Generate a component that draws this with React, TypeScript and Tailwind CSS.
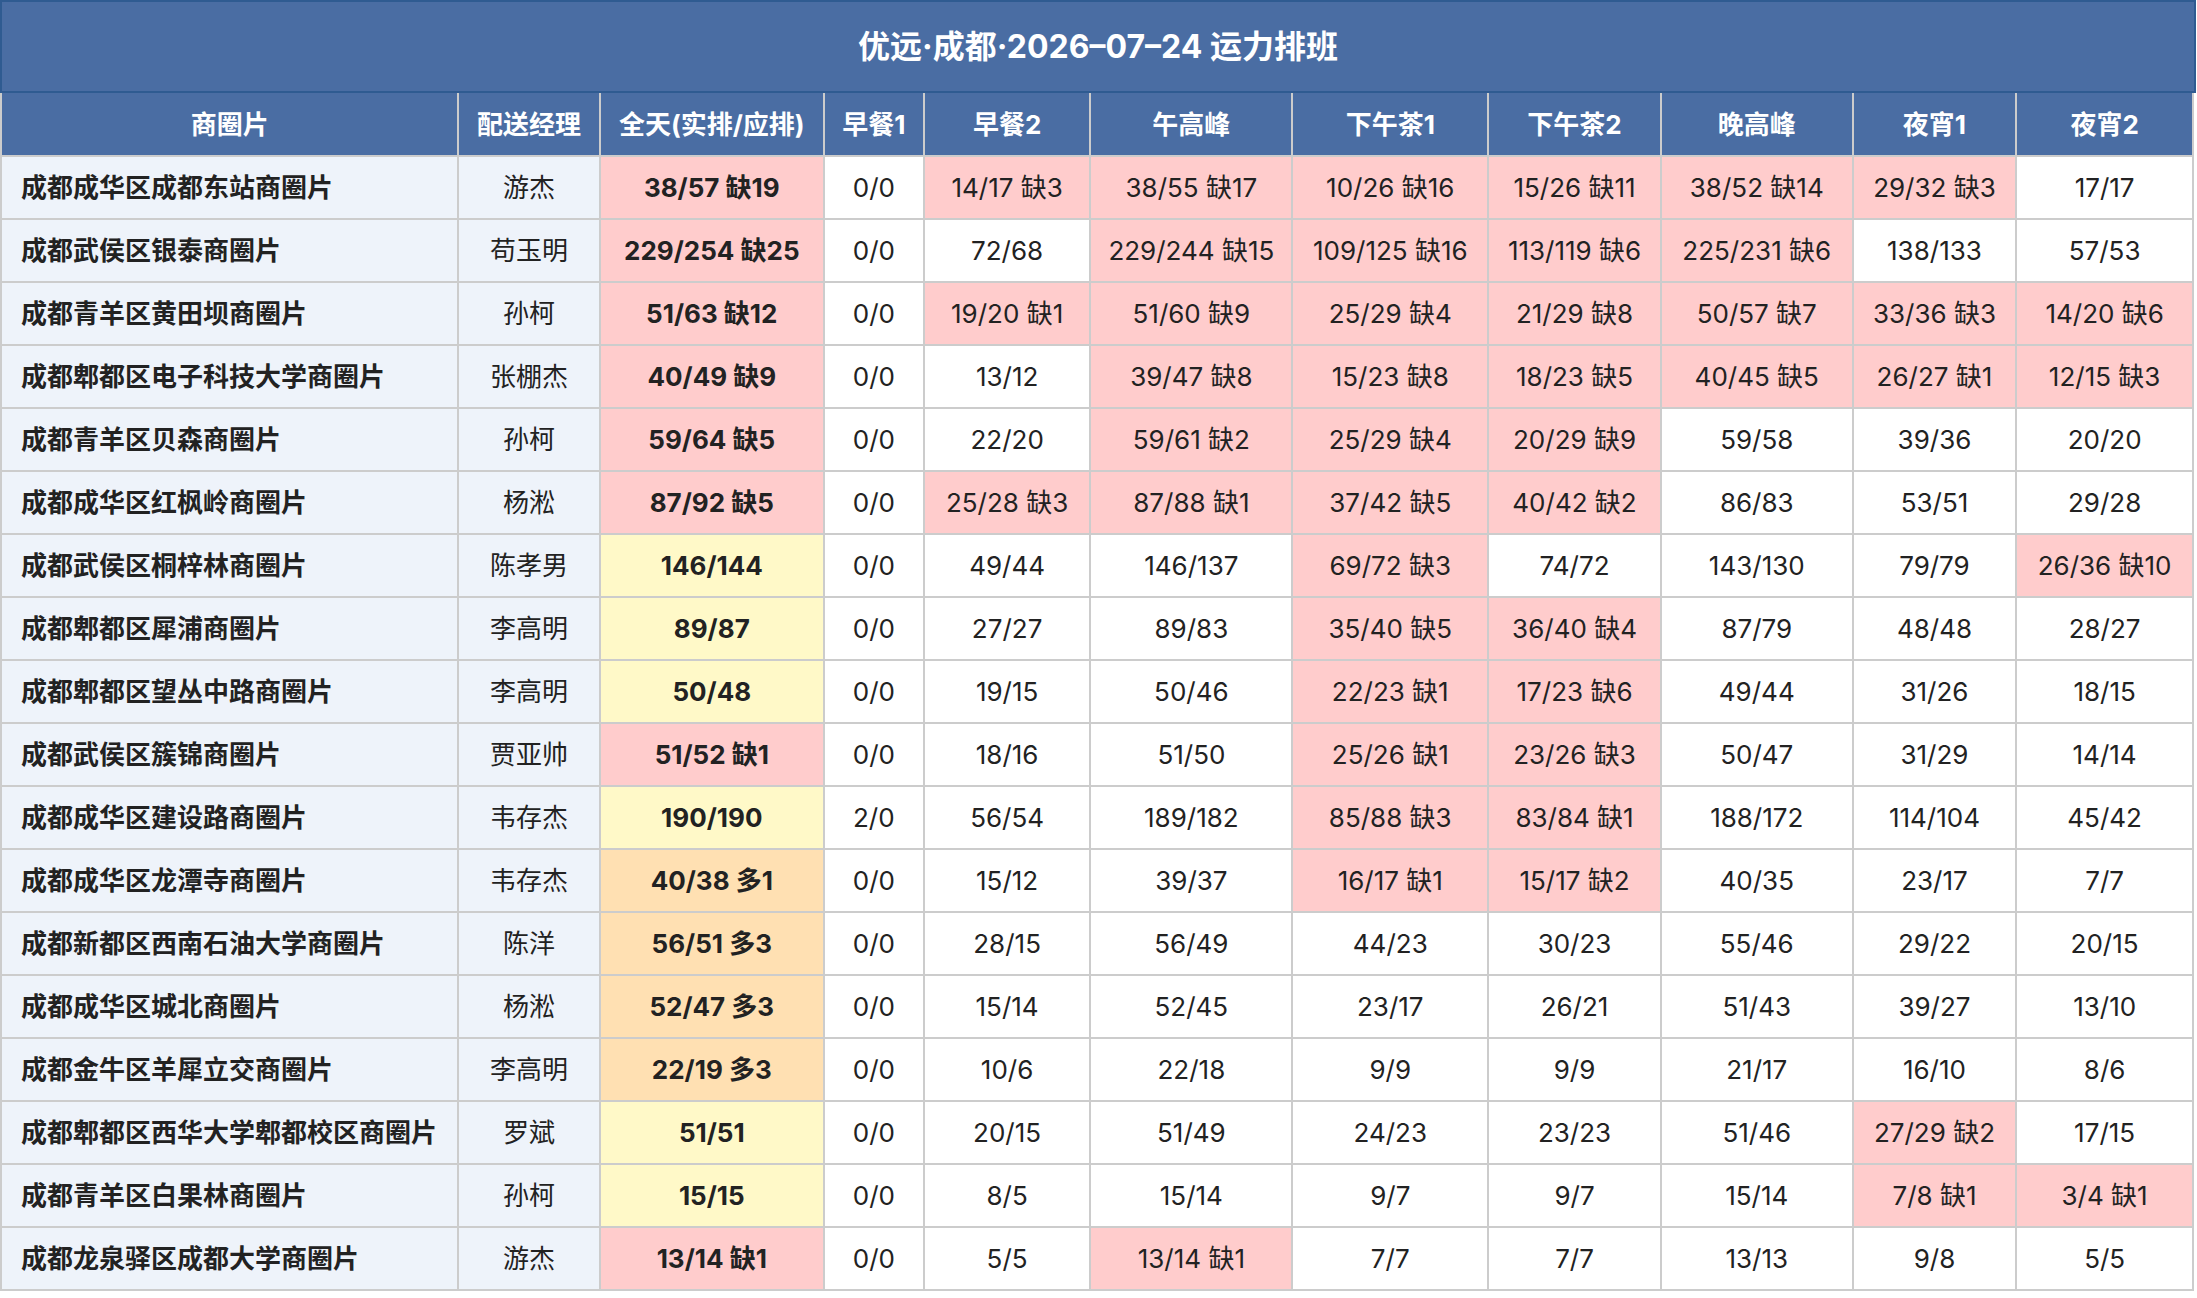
type Row = [string, string, string, string[]];

const columns = ["商圈片", "配送经理", "全天(实排/应排)", "早餐1", "早餐2", "午高峰", "下午茶1", "下午茶2", "晚高峰", "夜宵1", "夜宵2"];
const widths = ["w-[453px]", "w-[140px]", "w-[222px]", "w-[99px]", "w-[165px]", "w-[200px]", "w-[194px]", "w-[171px]", "w-[190px]", "w-[162px]", "w-[175px]"];

const rows: Row[] = [
  ["成都成华区成都东站商圈片", "游杰", "38/57 缺19", ["0/0", "14/17 缺3", "38/55 缺17", "10/26 缺16", "15/26 缺11", "38/52 缺14", "29/32 缺3", "17/17"]],
  ["成都武侯区银泰商圈片", "苟玉明", "229/254 缺25", ["0/0", "72/68", "229/244 缺15", "109/125 缺16", "113/119 缺6", "225/231 缺6", "138/133", "57/53"]],
  ["成都青羊区黄田坝商圈片", "孙柯", "51/63 缺12", ["0/0", "19/20 缺1", "51/60 缺9", "25/29 缺4", "21/29 缺8", "50/57 缺7", "33/36 缺3", "14/20 缺6"]],
  ["成都郫都区电子科技大学商圈片", "张棚杰", "40/49 缺9", ["0/0", "13/12", "39/47 缺8", "15/23 缺8", "18/23 缺5", "40/45 缺5", "26/27 缺1", "12/15 缺3"]],
  ["成都青羊区贝森商圈片", "孙柯", "59/64 缺5", ["0/0", "22/20", "59/61 缺2", "25/29 缺4", "20/29 缺9", "59/58", "39/36", "20/20"]],
  ["成都成华区红枫岭商圈片", "杨淞", "87/92 缺5", ["0/0", "25/28 缺3", "87/88 缺1", "37/42 缺5", "40/42 缺2", "86/83", "53/51", "29/28"]],
  ["成都武侯区桐梓林商圈片", "陈孝男", "146/144", ["0/0", "49/44", "146/137", "69/72 缺3", "74/72", "143/130", "79/79", "26/36 缺10"]],
  ["成都郫都区犀浦商圈片", "李高明", "89/87", ["0/0", "27/27", "89/83", "35/40 缺5", "36/40 缺4", "87/79", "48/48", "28/27"]],
  ["成都郫都区望丛中路商圈片", "李高明", "50/48", ["0/0", "19/15", "50/46", "22/23 缺1", "17/23 缺6", "49/44", "31/26", "18/15"]],
  ["成都武侯区簇锦商圈片", "贾亚帅", "51/52 缺1", ["0/0", "18/16", "51/50", "25/26 缺1", "23/26 缺3", "50/47", "31/29", "14/14"]],
  ["成都成华区建设路商圈片", "韦存杰", "190/190", ["2/0", "56/54", "189/182", "85/88 缺3", "83/84 缺1", "188/172", "114/104", "45/42"]],
  ["成都成华区龙潭寺商圈片", "韦存杰", "40/38 多1", ["0/0", "15/12", "39/37", "16/17 缺1", "15/17 缺2", "40/35", "23/17", "7/7"]],
  ["成都新都区西南石油大学商圈片", "陈洋", "56/51 多3", ["0/0", "28/15", "56/49", "44/23", "30/23", "55/46", "29/22", "20/15"]],
  ["成都成华区城北商圈片", "杨淞", "52/47 多3", ["0/0", "15/14", "52/45", "23/17", "26/21", "51/43", "39/27", "13/10"]],
  ["成都金牛区羊犀立交商圈片", "李高明", "22/19 多3", ["0/0", "10/6", "22/18", "9/9", "9/9", "21/17", "16/10", "8/6"]],
  ["成都郫都区西华大学郫都校区商圈片", "罗斌", "51/51", ["0/0", "20/15", "51/49", "24/23", "23/23", "51/46", "27/29 缺2", "17/15"]],
  ["成都青羊区白果林商圈片", "孙柯", "15/15", ["0/0", "8/5", "15/14", "9/7", "9/7", "15/14", "7/8 缺1", "3/4 缺1"]],
  ["成都龙泉驿区成都大学商圈片", "游杰", "13/14 缺1", ["0/0", "5/5", "13/14 缺1", "7/7", "7/7", "13/13", "9/8", "5/5"]],
];

function totalBg(v: string) {
  if (v.includes("缺")) return "bg-[#ffcccc]";
  if (v.includes("多")) return "bg-[#ffe0b2]";
  return "bg-[#fff9c8]";
}

export default function App() {
  return (
    <div className="w-[2196px] bg-white font-['Inter','Noto_Sans_CJK_SC',sans-serif] text-[#222]">
      <div className="flex h-[93px] items-center justify-center border-2 border-[#2f5b91] bg-[#4a6da3] text-[32px] font-bold text-white">
        优远·成都·2026–07–24 运力排班
      </div>
      <table className="w-[2194px] table-fixed border-collapse text-[26px]">
        <colgroup>
          {widths.map((w, i) => (
            <col key={i} className={w} />
          ))}
        </colgroup>
        <thead>
          <tr className="h-[63px] bg-[#4a6da3] text-white">
            {columns.map((c) => (
              <th key={c} className="border-2 border-t-0 border-[#cccccc] px-1 text-center font-bold whitespace-nowrap">
                {c}
              </th>
            ))}
          </tr>
        </thead>
        <tbody>
          {rows.map(([name, manager, total, slots]) => (
            <tr key={name} className="h-[63px]">
              <td className="border-2 border-[#cccccc] bg-[#eef3fa] pl-[19px] font-bold whitespace-nowrap">{name}</td>
              <td className="border-2 border-[#cccccc] bg-[#eef3fa] text-center">{manager}</td>
              <td className={`border-2 border-[#cccccc] text-center font-bold ${totalBg(total)}`}>{total}</td>
              {slots.map((s, i) => (
                <td
                  key={i}
                  className={`border-2 border-[#cccccc] text-center whitespace-nowrap ${s.includes("缺") ? "bg-[#ffcccc]" : "bg-white"}`}
                >
                  {s}
                </td>
              ))}
            </tr>
          ))}
        </tbody>
      </table>
    </div>
  );
}
